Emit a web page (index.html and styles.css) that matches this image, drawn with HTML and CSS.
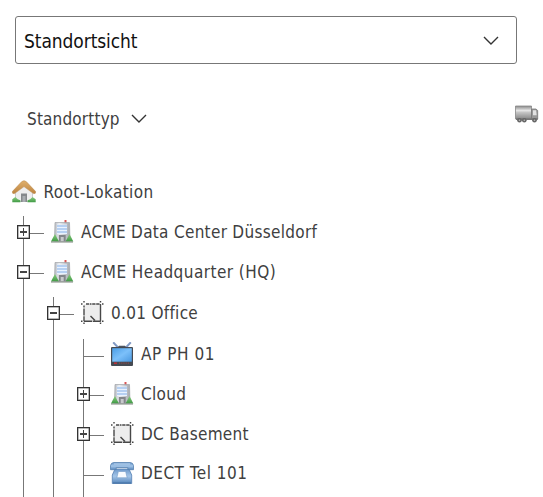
FILE: index.html
```
<!DOCTYPE html>
<html lang="de">
<head>
<meta charset="utf-8">
<title>Standortsicht</title>
<link rel="stylesheet" href="styles.css">
</head>
<body>
<svg class="defs" aria-hidden="true">
  <defs>
    <linearGradient id="g-wall" x2="1"><stop stop-color="#b4b8bf"/><stop offset=".3" stop-color="#eceef1"/><stop offset="1" stop-color="#a5a8ae"/></linearGradient>
    <linearGradient id="g-roof" x2="0" y2="1"><stop stop-color="#e0b06c"/><stop offset="1" stop-color="#bd8440"/></linearGradient>
    <linearGradient id="g-tv" x2="1" y2="1"><stop stop-color="#4a9de6"/><stop offset=".5" stop-color="#7cc0fa"/><stop offset="1" stop-color="#4a98e0"/></linearGradient>
    <linearGradient id="g-tel" x2="0" y2="1"><stop stop-color="#6d99cb"/><stop offset=".5" stop-color="#a3c5e8"/><stop offset="1" stop-color="#5585bb"/></linearGradient>
    <linearGradient id="g-truck" x2="0" y2="1"><stop stop-color="#8a8a8a"/><stop offset=".35" stop-color="#e6e6e6"/><stop offset=".5" stop-color="#c4c4c4"/><stop offset="1" stop-color="#888"/></linearGradient>
    <linearGradient id="g-grass" x2="0" y2="1"><stop stop-color="#8bcc80"/><stop offset="1" stop-color="#3f9a45"/></linearGradient>
    <symbol id="building" viewBox="0 0 24 24">
      <path d="M15.5 1v4" stroke="#999" stroke-width=".8"/>
      <path d="M14.5 1h2v3h-2z" fill="#d95555"/>
      <path d="M5 3.5h14.5L20 22H4.5z" fill="url(#g-wall)" stroke="#a0a3a8" stroke-width=".7"/>
      <path d="M7 5.5h10v9.5H7z" fill="#e9f2ff"/>
      <path d="M7 7h10M7 10h10M7 13h10" stroke="#a5c5ee" stroke-width="1.4"/>
      <path d="M8.8 22.5V16h6.9v6.5z" fill="#83868b"/>
      <path d="M10.7 22.5V18h3v4.5z" fill="#c7c9cc"/>
      <path d="M1 22.5l1.5-3 2.5-4.5 2.3 4.5 1.7 3zM15.5 22.5l1.7-3 2.3-4.5 2.3 4.5 1.5 3z" fill="url(#g-grass)"/>
      <path d="M1 23h22" stroke="#7e857e" stroke-width="1"/>
    </symbol>
    <symbol id="house" viewBox="0 0 24 24">
      <path d="M3.5 11L12 4l8.5 7v10.5h-17z" fill="#eeeeef" stroke="#bbb" stroke-width=".7"/>
      <path d="M9 22v-8.5h6V22z" fill="#85888c"/><path d="M10.5 22v-6h3v6z" fill="#aaaeb2"/>
      <path d="M.3 22.3v-3l3-2.2 2.4 2.2 2.7 1v2zM15.5 22.3v-2l2.7-1 2.3-2.2 3.2 2.2v3z" fill="url(#g-grass)"/>
      <path d="M.3 11.6L9.6 1.7Q12-.4 14.4 1.7l9.3 9.9q.3 2.4-2.2 2L12 6.6l-9.5 7q-2.5.4-2.2-2z" fill="url(#g-roof)" stroke="#b98649" stroke-width=".5"/>
    </symbol>
    <symbol id="room" viewBox="0 0 24 24">
      <path d="M4 4h16v17H4z" fill="#ededed"/>
      <path d="M4 5.5v2m0 1v7m0 .7v5M6 4h3m.7 0h1.8m.7 0h3.3m.7 0h3.3M20.5 4v17.5M4 21.3h8m.7 0h8" fill="none" stroke="#484848" stroke-width="1.4"/>
      <path d="M10.5 16l4.5 4.5" stroke="#444" stroke-width="1.4"/>
      <path d="M1 4h1.5M4 1v1.5M22 4h1.5M20.5 1v1.5M1 21.3h1.5M4 22.5V24M22 21.3h1.5M20.5 22.5V24" stroke="#444" stroke-width="1.4"/>
    </symbol>
    <symbol id="tv" viewBox="0 0 24 24">
      <path d="M3.2.3L8.5 6M20.8.3L15.5 6" stroke="#829ac4" stroke-width="2"/>
      <path d="M7.5 5.5L9 3.8h6l1.5 1.7z" fill="#4e5560"/>
      <rect x="1" y="5" width="22" height="19" rx="1" fill="#454a52"/>
      <rect x="2.2" y="6.2" width="19.6" height="13.5" fill="url(#g-tv)"/>
      <path d="M4 21.2h3" stroke="#bf3038" stroke-width="1.5"/><path d="M9 21.2h11" stroke="#8a484b" stroke-width="1.2" stroke-dasharray="1.2 1"/>
    </symbol>
    <symbol id="phone" viewBox="0 0 24 24">
      <path d="M5 8l14 0 2.7 6V22.5H2.3V14z" fill="url(#g-tel)" stroke="#5580b2" stroke-width=".8"/>
      <path d="M.5 4.5Q1 1.6 4 1.5h16q3 .1 3.5 3v4.2h-5.7V6.5H6.2v2.2H.5z" fill="url(#g-tel)" stroke="#5781b0" stroke-width=".8"/>
      <path d="M8.3 10.5h7.4l1.5 6.3H6.8z" fill="#f7fbff" stroke="#7aa1cc" stroke-width=".7"/>
      <path d="M4 3h16" stroke="#b6d1ec"/><path d="M3 22h18" stroke="#4471a3"/>
    </symbol>
    <symbol id="truck" viewBox="0 0 24 18">
      <path d="M.5 1h16v13H.5z" fill="url(#g-truck)" stroke="#888" stroke-width=".8"/>
      <path d="M16.5 4h4.5l1.7 1.5v8.5h-6.2z" fill="#999" stroke="#777" stroke-width=".8"/>
      <path d="M18 5.3h3l.7 5H18z" fill="#e2e2e2"/><path d="M1 13.3h21.7v1.7H1z" fill="#777"/>
      <g fill="#666"><circle cx="4.5" cy="15.3" r="2.3"/><circle cx="9.3" cy="15.3" r="2.3"/><circle cx="19.5" cy="15.3" r="2.3"/></g>
      <g fill="#bbb"><circle cx="4.5" cy="15.3" r=".8"/><circle cx="9.3" cy="15.3" r=".8"/><circle cx="19.5" cy="15.3" r=".8"/></g>
    </symbol>
  </defs>
</svg>
<main class="panel">
  <div class="select">
    <span class="select-label">Standortsicht</span>
    <svg class="chevron" viewBox="0 0 16 9"><path d="M1 1l7 7 7-7"/></svg>
  </div>
  <div class="toolbar">
    <div class="filter"><span class="filter-label">Standorttyp</span><svg class="chevron" viewBox="0 0 16 9"><path d="M1 1l7 7 7-7"/></svg></div>
    <svg class="truck"><use href="#truck"/></svg>
  </div>
  <div class="root"><svg class="icon"><use href="#house"/></svg><span class="root-label">Root-Lokation</span></div>
  <ul class="tree">
    <li><div class="row"><span class="line"><i class="toggle plus"></i></span><svg class="icon"><use href="#building"/></svg><span class="l-data">ACME Data Center Düsseldorf</span></div></li>
    <li><div class="row"><span class="line"><i class="toggle"></i></span><svg class="icon"><use href="#building"/></svg><span class="l-hq">ACME Headquarter (HQ)</span></div>
      <ul class="floor">
        <li><div class="row"><span class="line"><i class="toggle"></i></span><svg class="icon"><use href="#room"/></svg><span class="l-office">0.01 Office</span></div>
          <ul class="devices">
            <li><div class="row"><span class="line"></span><svg class="icon"><use href="#tv"/></svg><span class="l-ap">AP PH 01</span></div></li>
            <li><div class="row"><span class="line"><i class="toggle plus"></i></span><svg class="icon"><use href="#building"/></svg><span class="l-cloud">Cloud</span></div></li>
            <li><div class="row"><span class="line"><i class="toggle plus"></i></span><svg class="icon"><use href="#room"/></svg><span class="l-dc">DC Basement</span></div></li>
            <li><div class="row"><span class="line"></span><svg class="icon"><use href="#phone"/></svg><span class="l-dect">DECT Tel 101</span></div></li>
          </ul>
        </li>
      </ul>
    </li>
  </ul>
</main>
</body>
</html>
```
FILE: styles.css
```
* { box-sizing: border-box; }
body { margin: 0; background: #fff; color: #404040; font: 17px/24px "DejaVu Sans Condensed", "DejaVu Sans", sans-serif; font-stretch: condensed; overflow: hidden; }
.defs { position: absolute; width: 0; height: 0; }
.panel { height: 497px; padding-top: 16px; overflow: hidden; }
.select { width: 502px; height: 48px; margin-left: 15px; padding: 1px 17px 0 8px; border: 1px solid #777; border-radius: 3px; display: flex; align-items: center; justify-content: space-between; color: #111; font-size: 19px; letter-spacing: -.08px; }
.chevron { width: 16px; height: 9px; fill: none; stroke: #333; stroke-width: 1.4; }
.toolbar { height: 112px; padding: 40px 4px 0 27px; display: flex; justify-content: space-between; align-items: flex-start; }
.filter { display: flex; align-items: center; gap: 11px; padding-top: 3px; }
.filter-label { width: 93px; letter-spacing: .17px; }
.filter .chevron { margin-top: -2px; }
.truck { width: 24px; height: 18px; margin-top: 1px; }
.root { height: 32px; padding-left: 12px; display: flex; gap: 7.5px; }
.icon { width: 24px; height: 24px; flex: none; margin-top: 3px; }
.root .icon { margin-top: 4px; }
.root-label { padding-top: 4px; letter-spacing: .4px; }
ul { list-style: none; margin: 0; padding: 0; border-left: 1px solid #777; }
.tree { margin: 8px 0 0 23px; height: 300px; }
.floor { margin: 1px 0 0 29px; height: 230px; }
.devices { margin: 2px 0 0 29px; height: 170px; }
.row { display: flex; height: 40px; white-space: nowrap; }
.row > span:last-child { padding-top: 4px; letter-spacing: .3px; }
.row > .l-data { letter-spacing: .25px; }
.row > .l-hq { letter-spacing: .55px; }
.row > .l-office { letter-spacing: .3px; }
.row > .l-ap { letter-spacing: .65px; }
.row > .l-dc { letter-spacing: .25px; }
.row > .l-dect { letter-spacing: .6px; }
.row > span.l-hq:last-child { letter-spacing: .45px; }
.row > span.l-ap:last-child { letter-spacing: .55px; }
.row > span.l-dect:last-child { padding-top: 3px; letter-spacing: .5px; }
.row .icon { margin-left: 6px; margin-right: 7px; }
.line { width: 20px; height: 18px; border-bottom: 1px solid #777; flex: none; }
.devices > li:first-child .row { height: 39px; }
.devices > li:first-child .row > span:last-child { padding-top: 3px; }
.toggle { display: block; width: 13px; height: 14px; margin: 9px 0 0 -7px; border: 1px solid #333; box-shadow: inset 0 0 0 .5px #777; background: linear-gradient(#444, #444) center / 7px 2px no-repeat #fff; position: relative; }
.toggle.plus { background: linear-gradient(#444, #444) center / 7px 2px no-repeat, linear-gradient(#444, #444) center / 1px 8px no-repeat #fff; }
```
